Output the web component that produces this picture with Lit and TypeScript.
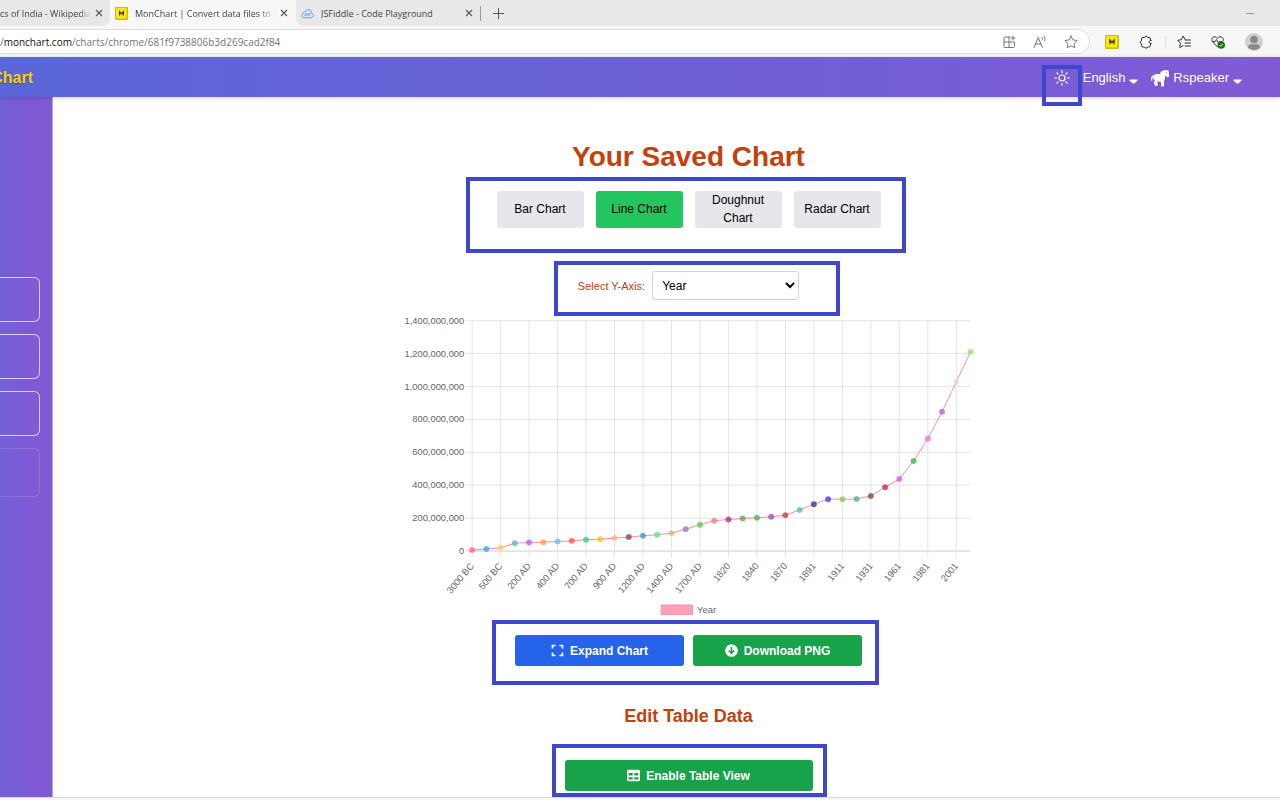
import { LitElement, html, svg, css } from "lit";
import { customElement, state } from "lit/decorators.js";

const LABELS: Record<number, string> = {
  0: "3000 BC", 2: "500 BC", 4: "200 AD", 6: "400 AD", 8: "700 AD", 10: "900 AD",
  12: "1200 AD", 14: "1400 AD", 16: "1700 AD", 18: "1820", 20: "1840", 22: "1870",
  24: "1891", 26: "1911", 28: "1931", 30: "1961", 32: "1981", 34: "2001",
};

// Population in millions, paired with the marker colour.
const POINTS: [number, string][] = [
  [6, "#ff6384"], [12, "#36a2eb"], [20, "#ffce56"], [48, "#4bc0c0"], [52, "#9966ff"], [54, "#ff9f40"],
  [58, "#5bc0f8"], [62, "#ff5733"], [69, "#2ecc71"], [72, "#f1c40f"], [79, "#ffb380"], [85, "#8e3a59"],
  [93, "#2f9fb8"], [99, "#4be586"], [109, "#c9bd77"], [133, "#9a6fc8"], [160, "#4fd22e"], [184, "#f47c74"],
  [192, "#ac2f7c"], [198, "#4caf50"], [202, "#47b04b"], [208, "#9048d0"], [218, "#b83c3c"], [250, "#4cc2a0"],
  [285, "#2b2f9e"], [315, "#4a2fe8"], [315, "#8acb5b"], [316, "#43b295"], [335, "#6b4f2a"], [388, "#cc1f4e"],
  [438, "#cf5ae0"], [547, "#2fb83a"], [683, "#ff66e6"], [846, "#a566d8"], [1028, "#dcdfe0"], [1210, "#86e857"],
];

const FONT = css`"Liberation Sans", Arial, sans-serif`;

@customElement("line-chart")
export class LineChart extends LitElement {
  static styles = css`
    :host { display: block; width: 100%; max-width: 575px; }
    svg { display: block; width: 100%; height: auto; }
    text { font: 12px ${FONT}; fill: #666; }
    .grid { stroke: #e5e5e5; stroke-width: 1; vector-effect: non-scaling-stroke; }
    .base { stroke: #cfcfcf; stroke-width: 1; vector-effect: non-scaling-stroke; }
    .line { fill: none; stroke: #ff6384; stroke-opacity: 0.8; stroke-width: 1.2; }
    .dot { fill-opacity: 0.75; stroke-opacity: 0.4; stroke-width: 1; }
    .key { fill: #ffa1b5; stroke: #ff829d; }
  `;

  render() {
    const left = 91, right = 729, top = 11, bottom = 306;
    const x = (i: number) => left + (i * (right - left)) / (POINTS.length - 1);
    const y = (v: number) => bottom - (v * (bottom - top)) / 1400;
    const ticks = [0, 200, 400, 600, 800, 1000, 1200, 1400];
    return html`<svg viewBox="0 0 736 392" role="img" aria-label="Line chart">
      ${ticks.map((t) => svg`
        <line class=${t ? "grid" : "base"} x1=${left - 8} x2=${right} y1=${y(t)} y2=${y(t)}></line>
        <text x=${left - 10} y=${y(t) + 4} text-anchor="end">${(t * 1e6).toLocaleString("en-US")}</text>`)}
      ${Object.entries(LABELS).map(([k, label]) => svg`
        <line class="grid" x1=${x(+k)} x2=${x(+k)} y1=${top} y2=${bottom + 8}></line>
        <text text-anchor="end" transform="translate(${x(+k)} ${bottom + 17}) rotate(-50)" y="4">${label}</text>`)}
      <polyline class="line" points=${POINTS.map(([v], i) => `${x(i)},${y(v)}`).join(" ")}></polyline>
      ${POINTS.map(([v, c], i) => svg`<circle class="dot" cx=${x(i)} cy=${y(v)} r="3.5" fill=${c} stroke=${c}></circle>`)}
      <rect class="key" x="333" y="375" width="40" height="12"></rect>
      <text x="379" y="385">Year</text>
    </svg>`;
  }
}

const cross = html`<svg class="x" viewBox="0 0 8 8"><path d="M1 1l6 6M7 1l-6 6" fill="none" stroke="#555" stroke-width="1.1"/></svg>`;
const favicon = html`<svg class="fav" viewBox="0 0 13 13"><rect width="13" height="13" rx="1" fill="#d3bd00"/><rect x="1" y="1" width="10.5" height="10.5" fill="#fbe616"/><path d="M4.6 8.600V4.700l1.900 2.200 1.900-2.200v3.900" fill="none" stroke="#3a3600" stroke-width="1.2"/></svg>`;
const caret = html`<svg class="caret" viewBox="0 0 9 5"><path d="M1.2.5h6.6c.8 0 1 .7.5 1.200L5.600 4.200c-.7.6-1.500.6-2.200 0L.7 1.700C.2 1.200.4.500 1.200.500z" fill="#fff"/></svg>`;

@customElement("browser-chrome")
export class BrowserChrome extends LitElement {
  static styles = css`
    :host { display: block; background: #f7f7f7; font-family: "Open Sans", "Noto Sans", sans-serif; color: #444; }
    .tabs { display: flex; height: 26px; font-size: 9px; }
    .tab { display: flex; align-items: center; gap: 7px; box-sizing: border-box; width: 186px; padding: 0 8px 0 5px; white-space: nowrap; }
    .tab.first { width: 110px; padding: 0 7px 0 0; background: #e8e8e8; border-bottom-right-radius: 8px; }
    .tab.last { background: #e8e8e8; border-bottom-left-radius: 8px; width: 184px; padding-right: 7px; }
    .title { flex: 1; overflow: hidden; margin-right: -3px; -webkit-mask-image: linear-gradient(to right, #000 88%, transparent); }
    .first .title { display: flex; justify-content: flex-end; }
    .last .title { -webkit-mask-image: none; }
    .x { width: 8px; height: 8px; flex: none; }
    .fav { width: 13px; height: 13px; flex: none; }
    .strip { flex: 1; display: flex; align-items: center; justify-content: space-between; background: #e8e8e8; padding-right: 26px; }
    .new { display: flex; align-items: center; gap: 12px; border: 0; padding: 0; background: none; }
    .new::before { content: ""; width: 1px; height: 15px; background: #999; }
    .new svg { width: 11px; height: 11px; }
    .min { width: 8px; height: 1px; background: #999; }
    .bar { display: flex; align-items: center; height: 31px; }
    .address { flex: 1; display: flex; align-items: center; justify-content: space-between; box-sizing: border-box; height: 25px; background: #fff; border: 1px solid #dedede; border-left: 0; border-radius: 0 13px 13px 0; padding-right: 11px; font-size: 10px; color: #767676; }
    .host { color: #111; }
    .inside { display: flex; align-items: center; gap: 17px; }
    .inside svg, .tools svg { width: 14px; height: 14px; display: block; }
    .tools { display: flex; align-items: center; gap: 20px; width: 190px; box-sizing: border-box; padding-left: 15px; }
    .sep { width: 1px; height: 12px; background: #ddd; margin: 0 -9px 0 -8px; }
    .tools svg.avatar { width: 18px; height: 18px; }
    .ln { fill: none; stroke: #777; stroke-width: 1; stroke-linejoin: round; stroke-linecap: round; }
    .dk { stroke: #333; }
  `;

  render() {
    return html`
      <div class="tabs">
        <div class="tab first"><span class="title">Demographics of India - Wikipedia</span>${cross}</div>
        <div class="tab">${favicon}<span class="title">MonChart | Convert data files to charts</span>${cross}</div>
        <div class="tab last">
          <svg class="fav" viewBox="0 0 14 14"><path d="M3.500 11.500C1.600 11.500.8 10.200.9 9c.1-1 .7-1.700 1.400-2C2 5.500 3.500 4.600 4.600 5.300 5.400 3.400 7 2.700 8.500 3c2 .4 3 2 2.900 3.700 1.200.4 1.900 1.300 1.800 2.500-.1 1.400-1.100 2.300-2.500 2.300zM4.200 8.300c0-1.400 1.600-1.700 2.700-.4s2.800 1.800 2.900.2c0-1.600-1.700-1.700-2.900-.2-1.100 1.400-2.700 1.700-2.700.4z" fill="none" stroke="#4a9fe8"/></svg>
          <span class="title">JSFiddle - Code Playground</span>${cross}
        </div>
        <div class="strip">
          <button class="new" aria-label="New tab"><svg viewBox="0 0 11 11"><path d="M5.500 0v11M0 5.500h11" stroke="#555"/></svg></button>
          <span class="min"></span>
        </div>
      </div>
      <div class="bar">
        <div class="address">
          <span>/<span class="host">monchart.com</span>/charts/chrome/681f9738806b3d269cad2f84</span>
          <span class="inside">
            <svg viewBox="0 0 14 14"><path class="ln" d="M8 2H3a1 1 0 0 0-1 1v8.500a1 1 0 0 0 1 1h8.500a1 1 0 0 0 1-1V7H2M7 2v10.500M11 1v4M9 3h4"/></svg>
            <svg viewBox="0 0 14 14"><path class="ln" d="M1 12.500L5.200 2.500l4.200 10M2.500 9h5.500M8.800 2.500c.8.600 1 1.600.6 2.500M10.500 1c1.600 1.200 2 3.200 1.200 5"/></svg>
            <svg viewBox="0 0 14 14"><path class="ln" d="M7 1l1.900 3.900 4.300.6-3.100 3 .7 4.300L7 10.800l-3.800 2 .7-4.300-3.100-3 4.300-.6z"/></svg>
          </span>
        </div>
        <div class="tools">
          ${favicon}
          <svg viewBox="0 0 14 14"><path class="ln dk" d="M4 2.500h1.500C5.700.7 8.300.7 8.500 2.500H10A1.500 1.500 0 0 1 11.500 4v1.500h1C12.500 5.500 10 5.500 10 7s2.500 1.500 2.500 1.500h-1V10.500A1.500 1.500 0 0 1 10 12H8.500c-.2 1.500-2.800 1.500-3 0H4A1.500 1.500 0 0 1 2.500 10.500V8.700C.7 8.500.7 5.900 2.500 5.700V4A1.500 1.500 0 0 1 4 2.500z"/></svg>
          <span class="sep"></span>
          <svg viewBox="0 0 14 14"><path class="ln dk" d="M8.500 5L6 1 4.300 4.700.7 5.300l2.700 2.900-.7 4.300L6 10.700M8.500 5h5M8 8h5.500M8 11h5.500"/></svg>
          <svg viewBox="0 0 14 14"><path class="ln dk" d="M6.500 12L1.700 7C.4 5.500.7 3.300 2 2.300c1.500-1 3.300-.6 4.500 1C7.700 1.700 9.800 1.300 11.200 2.400c1.300 1.100 1.400 2.500.9 3.600M1.500 6.500h2.700L5.500 4.500 7.500 8l1-1.500h2"/><circle cx="10.200" cy="10" r="3.800" fill="#107c10"/><path d="M8.500 10l1.200 1.200 2.200-2.200" fill="none" stroke="#fff"/></svg>
          <svg class="avatar" viewBox="0 0 18 18"><circle cx="9" cy="9" r="9" fill="#d2d0ce"/><circle cx="9" cy="6.500" r="3.800" fill="#8a8886"/><path d="M3 14.500c0-2.500 1.500-3.200 3-3.200h6c1.500 0 3 .7 3 3.200-1.500 1.600-3.500 2.500-6 2.500s-4.500-.9-6-2.500z" fill="#8a8886"/></svg>
        </div>
      </div>`;
  }
}

@customElement("app-root")
export class AppRoot extends LitElement {
  @state() private kind = "Line Chart";

  static styles = css`
    :host { display: flex; flex-direction: column; min-height: 100vh; box-sizing: border-box; background: #fff; font-family: ${FONT}; }
    button, select { font-family: inherit; cursor: pointer; }
    .head { position: relative; z-index: 1; display: flex; align-items: center; justify-content: space-between; box-sizing: border-box; height: 40px; padding: 2px 38px 0 0; background: linear-gradient(to right, #5a67d8, #805ad5); box-shadow: 0 1px 5px rgba(0, 0, 0, 0.18); color: #fff; }
    .logo { display: flex; justify-content: flex-end; width: 33px; overflow: hidden; color: #facc15; font-size: 16px; font-weight: bold; line-height: 24px; text-decoration: none; text-shadow: 0 1px 2px rgba(0, 0, 0, 0.3); }
    .nav { display: flex; align-items: center; gap: 13px; }
    .nav button { display: flex; align-items: center; gap: 4px; padding: 0; border: 0; background: none; color: #fff; font-size: 13px; line-height: 20px; }
    .caret { width: 9px; height: 5px; margin-top: 6px; }
    .horse { width: 18px; height: 18px; }
    .sun { width: 16px; height: 16px; }
    .marked { position: relative; }
    .marked::after { content: ""; position: absolute; border: 4px solid #3f48cc; pointer-events: none; }
    .nav .theme { gap: 0; }
    .theme::after { inset: -5px -12px -20px -12px; }
    .kinds::after { inset: -14px -25px -25px -31px; }
    .axis::after { inset: -10px -41px -16px -24px; }
    .actions::after { inset: -15px -17px -19px -23px; }
    .table::after { inset: -16px -14px -6px -13px; }
    .body { flex: 1; display: flex; border-bottom: 1px solid #d9d9d9; }
    .side { display: flex; flex-direction: column; gap: 12px; box-sizing: border-box; width: 53px; padding: 180px 12px 0 0; border-right: 1px solid #b9a4e6; background: linear-gradient(to right, #755fd7, #805ad5 75%); }
    .side a { box-sizing: border-box; height: 45px; border: 1px solid #d9cff2; border-left: 0; border-radius: 0 6px 6px 0; }
    .side a.off { height: 49px; border-color: #9075d6; }
    .main { flex: 1; display: flex; flex-direction: column; align-items: center; padding: 44px 0 5px 44px; }
    h1, h2 { margin: 0; color: #c2410c; }
    h1 { font-size: 28px; line-height: 32px; }
    h2 { margin: 38px 0 32px; font-size: 18px; line-height: 24px; }
    .kinds { display: grid; grid-template-columns: repeat(4, 87px); gap: 12px; margin-top: 18px; }
    .kinds button { height: 37px; padding: 0 8px 2px; border: 0; border-radius: 3px; background: #e5e7eb; color: #000; font-size: 12px; line-height: 18px; }
    .kinds button.on { background: #22c55e; }
    .axis { display: flex; align-items: center; gap: 7px; margin: 43px 0 12px; color: #c2410c; font-size: 11px; }
    select { box-sizing: border-box; width: 147px; height: 29px; padding: 0 5px; border: 1px solid #d1d5db; border-radius: 3px; background: #fff; color: #000; font-size: 12px; box-shadow: 0 1px 2px rgba(0, 0, 0, 0.05); }
    .actions { display: flex; gap: 9px; margin-top: 17px; }
    .action { display: flex; align-items: center; justify-content: center; gap: 6px; width: 169px; height: 31px; padding: 0; border: 0; border-radius: 3px; background: #16a34a; color: #fff; font-size: 12px; font-weight: bold; }
    .action.blue { background: #2563eb; }
    .action svg { width: 13px; height: 13px; }
    .table .action { width: 248px; }
    .foot { height: 2px; background: #f7f7f7; }
  `;

  render() {
    return html`
      <browser-chrome></browser-chrome>
      <header class="head">
        <a class="logo" href="#">MonChart</a>
        <nav class="nav">
          <button class="theme marked" aria-label="Theme">
            <svg class="sun" viewBox="0 0 16 16" fill="none" stroke="#fff" stroke-width="1.200" stroke-linecap="round"><circle cx="8" cy="8" r="3"/><path d="M8 .8v1.700M8 13.500v1.700M.8 8h1.700M13.500 8h1.700M2.900 2.900l1.200 1.200M11.900 11.900l1.200 1.200M13.100 2.900l-1.200 1.200M4.100 11.900l-1.200 1.200"/></svg>
          </button>
          <button>English ${caret}</button>
          <button>
            <svg class="horse" viewBox="0 0 576 512"><path fill="#fff" d="M575.900 76.600c0-8.300-3.200-16.300-9-22.200-2.100-2.100-6.600-5.600-12.200-9.400 4.400-6.400 8-13.400 9.200-21.400 1.300-8.200-5-15.600-13.300-15.600H430c-68 0-125 45-140 116H176c-35 0-65 19-82 47-51 4-94 45-94 97v60c0 9 7 16 16 16h16c9 0 16-7 16-16v-60c0-17 9-32 22-41v7c0 30 12 57 32 77l20 18-22 56c-3 8-3 16-1 24l19 77c3 11 12 18 23 18h52c16 0 27-15 23-30l-17-67 20-50 101 23v124c0 13 11 24 24 24h50c13 0 24-11 24-24V341c19-22 31-49 31-80v-83l34 13 14 28c6 12 19 18 31 14l38-13c9-4 15-12 15-22zM496 96c-9 0-16-7-16-16s7-16 16-16 16 7 16 16-7 16-16 16z"/></svg>
            Rspeaker ${caret}
          </button>
        </nav>
      </header>
      <div class="body">
        <nav class="side">
          <a href="#" aria-label="Item 1"></a><a href="#" aria-label="Item 2"></a><a href="#" aria-label="Item 3"></a><a class="off" href="#" aria-label="Item 4"></a>
        </nav>
        <main class="main">
          <h1>Your Saved Chart</h1>
          <div class="kinds marked">
            ${["Bar Chart", "Line Chart", "Doughnut Chart", "Radar Chart"].map((k) => html`
              <button class=${k === this.kind ? "on" : ""} @click=${() => (this.kind = k)}>${k}</button>`)}
          </div>
          <div class="axis marked">
            <label for="y-axis">Select Y-Axis:</label>
            <select id="y-axis"><option>Year</option></select>
          </div>
          <line-chart></line-chart>
          <div class="actions marked">
            <button class="action blue">
              <svg viewBox="0 0 13 13" fill="none" stroke="#fff" stroke-width="1.700"><path d="M1.500 4.500v-3h3M8.500 1.500h3v3M11.500 8.500v3h-3M4.500 11.500h-3v-3"/></svg>
              Expand Chart
            </button>
            <button class="action">
              <svg viewBox="0 0 13 13"><circle cx="6.500" cy="6.500" r="6.300" fill="#fff"/><path d="M6.500 3v6M3.800 6.500l2.700 2.700 2.700-2.700" fill="none" stroke="#16a34a" stroke-width="1.600"/></svg>
              Download PNG
            </button>
          </div>
          <h2>Edit Table Data</h2>
          <div class="table marked">
            <button class="action">
              <svg viewBox="0 0 512 512"><path fill="#fff" d="M64 256V160H224v96H64zm0 64H224v96H64V320zm224 96V320H448v96H288zM448 256H288V160H448v96zM64 32C28.700 32 0 60.700 0 96V416c0 35.300 28.700 64 64 64H448c35.300 0 64-28.700 64-64V96c0-35.300-28.700-64-64-64H64z"/></svg>
              Enable Table View
            </button>
          </div>
        </main>
      </div>
      <div class="foot"></div>`;
  }
}
